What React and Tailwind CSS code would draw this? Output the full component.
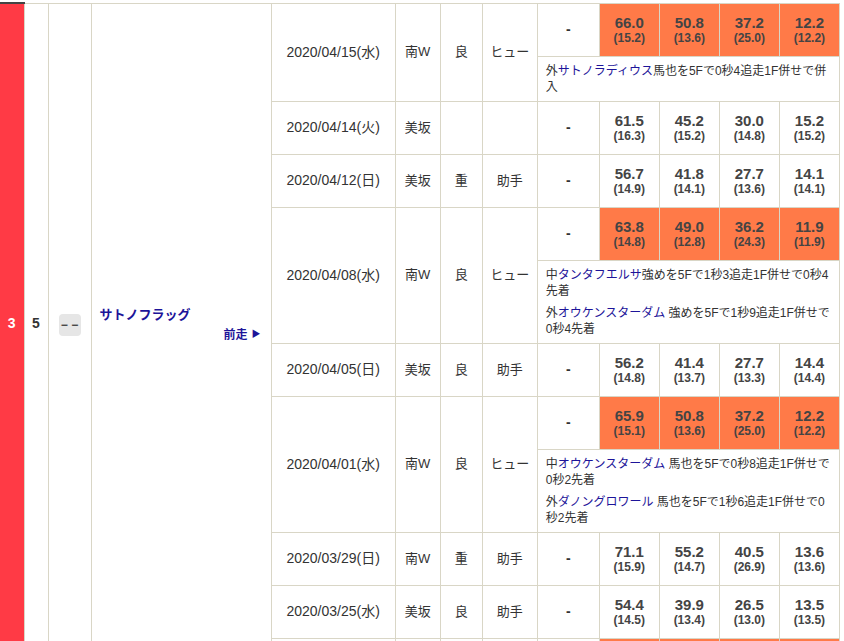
const rows = [
  { d: "2020/04/15(水)", c: "南W", t: "良", r: "ヒュー", hl: true, v: [["66.0", "15.2"], ["50.8", "13.6"], ["37.2", "25.0"], ["12.2", "12.2"]],
    notes: [["外", "サトノラディウス", "馬也を5Fで0秒4追走1F併せで併入"]] },
  { d: "2020/04/14(火)", c: "美坂", t: "", r: "", v: [["61.5", "16.3"], ["45.2", "15.2"], ["30.0", "14.8"], ["15.2", "15.2"]] },
  { d: "2020/04/12(日)", c: "美坂", t: "重", r: "助手", v: [["56.7", "14.9"], ["41.8", "14.1"], ["27.7", "13.6"], ["14.1", "14.1"]] },
  { d: "2020/04/08(水)", c: "南W", t: "良", r: "ヒュー", hl: true, v: [["63.8", "14.8"], ["49.0", "12.8"], ["36.2", "24.3"], ["11.9", "11.9"]],
    notes: [["中", "タンタフエルサ", "強めを5Fで1秒3追走1F併せで0秒4先着"], ["外", "オウケンスターダム", " 強めを5Fで1秒9追走1F併せで0秒4先着"]] },
  { d: "2020/04/05(日)", c: "美坂", t: "良", r: "助手", v: [["56.2", "14.8"], ["41.4", "13.7"], ["27.7", "13.3"], ["14.4", "14.4"]] },
  { d: "2020/04/01(水)", c: "南W", t: "良", r: "ヒュー", hl: true, v: [["65.9", "15.1"], ["50.8", "13.6"], ["37.2", "25.0"], ["12.2", "12.2"]],
    notes: [["中", "オウケンスターダム", " 馬也を5Fで0秒8追走1F併せで0秒2先着"], ["外", "ダノングロワール", " 馬也を5Fで1秒6追走1F併せで0秒2先着"]] },
  { d: "2020/03/29(日)", c: "南W", t: "重", r: "助手", v: [["71.1", "15.9"], ["55.2", "14.7"], ["40.5", "26.9"], ["13.6", "13.6"]] },
  { d: "2020/03/25(水)", c: "美坂", t: "良", r: "助手", v: [["54.4", "14.5"], ["39.9", "13.4"], ["26.5", "13.0"], ["13.5", "13.5"]] },
  { d: "", c: "", t: "", r: "", hl: true, v: [["", ""], ["", ""], ["", ""], ["", ""]] },
];

const td = "border border-[#d9d6c6]";

function Row({ row, first }) {
  const span = row.notes ? 2 : 1;
  return (
    <>
      <tr className="h-[53px]">
        {first && (
          <>
            <td rowSpan={20} className="bg-[#ff3a45] border-t-2 border-t-[#444] border-r border-r-[#d9d6c6] text-center text-white font-bold text-[14px] align-top pt-[309px]">3</td>
            <td rowSpan={20} className={`${td} text-center font-bold text-[14px] text-[#333] align-top pt-[309px]`}>5</td>
            <td rowSpan={20} className={`${td} text-center align-top pt-[308px]`}>
              <span className="inline-flex w-[22px] h-[22px] items-center justify-center rounded bg-[#e6e6e6] text-[#444] font-bold text-[12px] leading-none">− −</span>
            </td>
            <td rowSpan={20} className={`${td} align-top px-2 pt-[301px]`}>
              <div className="text-[#1d1499] font-bold text-[13px]">サトノフラッグ</div>
              <div className="flex justify-end items-center gap-1 text-[#1d1499] font-bold text-[12px] mt-0.5 pr-0.5">
                前走<span className="text-[9px]">▶</span>
              </div>
            </td>
          </>
        )}
        <td rowSpan={span} className={`${td} text-center text-[14px] text-[#333]`}>{row.d}</td>
        <td rowSpan={span} className={`${td} text-center text-[13px] text-[#333]`}>{row.c}</td>
        <td rowSpan={span} className={`${td} text-center text-[13px] text-[#333]`}>{row.t}</td>
        <td rowSpan={span} className={`${td} text-center text-[13px] text-[#333]`}>{row.r}</td>
        <td className={`${td} text-center font-bold text-[14px] text-[#333]`}>{row.d ? "-" : ""}</td>
        {row.v.map(([a, b], i) => (
          <td key={i} className={`${td} text-center text-[#444] font-bold ${row.hl ? "bg-[#ff7a48]" : ""}`}>
            <div className="text-[15px] leading-[16px]">{a}</div>
            <div className="text-[12px] leading-[14px]">{b && `(${b})`}</div>
          </td>
        ))}
      </tr>
      {row.notes && (
        <tr>
          <td colSpan={5} className={`${td} px-2 py-1.5 text-[12px] leading-[16px] text-[#333]`}>
            {row.notes.map(([p, n, rest], i) => (
              <div key={i} className={i ? "mt-1.5" : ""}>
                {p}<span className="text-[#1d1499]">{n}</span>{rest}
              </div>
            ))}
          </td>
        </tr>
      )}
    </>
  );
}

export default function App() {
  return (
    <div className="w-[844px] h-[641px] overflow-hidden bg-white pt-[2px]" style={{ fontFamily: '"Liberation Sans", "Noto Sans CJK JP", sans-serif' }}>
      <table className="table-fixed border-collapse w-[840px]">
        <colgroup>
          <col className="w-[24px]" /><col className="w-[24px]" /><col className="w-[43px]" /><col className="w-[180px]" />
          <col className="w-[124px]" /><col className="w-[45px]" /><col className="w-[42px]" /><col className="w-[55px]" />
          <col className="w-[62px]" /><col className="w-[60px]" /><col className="w-[60px]" /><col className="w-[60px]" /><col className="w-[60px]" />
        </colgroup>
        <tbody>
          {rows.map((r, i) => <Row key={i} row={r} first={i === 0} />)}
        </tbody>
      </table>
    </div>
  );
}
